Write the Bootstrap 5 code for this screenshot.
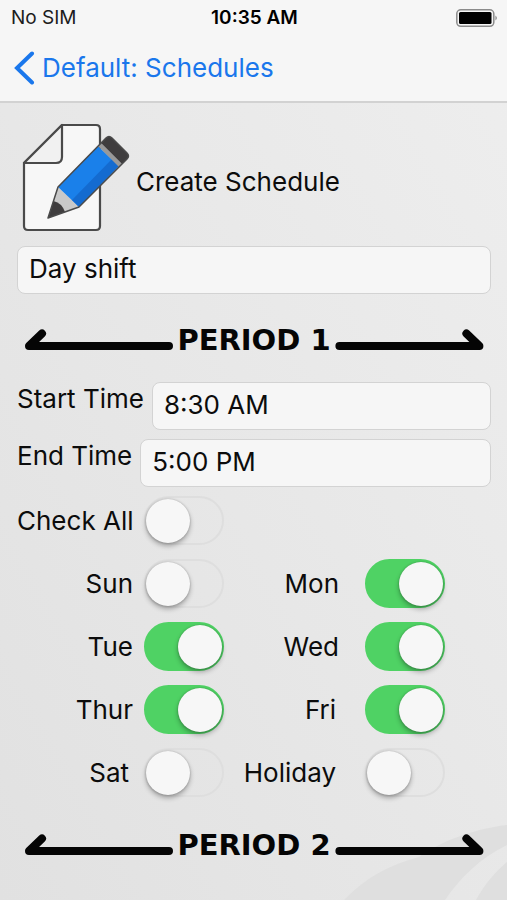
<!DOCTYPE html>
<html lang="en">
<head>
<meta charset="utf-8">
<meta name="viewport" content="width=device-width, initial-scale=1">
<title>Create Schedule</title>
<link href="https://cdn.jsdelivr.net/npm/bootstrap@5.3.0/dist/css/bootstrap.min.css" rel="stylesheet">
<style>
body { font-family: Inter, "Liberation Sans", sans-serif; font-size: 26px; line-height: 32px; color: #0c0c0c; background: #e7e7e7; }
.screen { background: linear-gradient(60deg, #e1e1e1 0%, #e7e7e7 45%, #eeeeee 100%); }
.top-area { background: #f6f6f6; border-bottom: 2px solid #d2d2d2; }
.status { font-size: 19px; line-height: 34px; padding: 1px 9px 0 11px; color: #1c1c1c; }
.status > * { flex: 1 1 0; }
.back-link { color: #1a77ec; padding: 15px 14px 15px; gap: 7px; line-height: 36px; }
.content { padding: 18px 16px 0 17px; }
.heading { font-size: 26px; line-height: 32px; padding-top: 8px; }
.field { font-size: 26px; line-height: 32px; height: 48px; padding: 0 11px 3px; background: #f6f6f6; border: 1px solid #d3d3d3; border-radius: 8px; color: #0c0c0c; }
.name-field { margin-top: 11px; }
.time-label { line-height: 34px; }
.period { font-family: "DejaVu Sans", sans-serif; font-weight: 700; font-size: 29px; line-height: 32px; color: #050505; gap: 3px; padding: 0 7px; margin: 29px 0 26px; }
.period svg { flex: 1 1 0; min-width: 0; height: 24px; }
.period span { padding-top: 1px; }
.rows { gap: 9px; margin-bottom: 31px; }
.days { display: grid; grid-template-columns: 116px 80px minmax(114px, 1fr) 80px; column-gap: 11px; row-gap: 14px; padding-right: 46px; }
.days label { text-align: right; }
.days .second { padding-right: 15px; }
.days .third { padding-right: 18px; }
.toggle { appearance: none; position: relative; flex: none; width: 80px; height: 49px; margin: 0; border: 2px solid #dedede; border-radius: 25px; background: transparent; }
.toggle::before { content: ""; display: block; width: 44px; height: 44px; margin-top: 1px; border-radius: 50%; background: #f7f7f7; box-shadow: 0 3px 5px rgba(0,0,0,.3), 0 0 2px rgba(0,0,0,.25); }
.toggle:checked { background: #4fd264; border-color: #4fd264; }
.toggle:checked::before { margin-left: 32px; }
.watermark { right: 0; bottom: 0; width: 180px; height: 100px; z-index: 0; }
</style>
<script src="https://cdn.jsdelivr.net/npm/bootstrap@5.3.0/dist/js/bootstrap.bundle.min.js"></script>
</head>
<body>
<div class="screen position-relative min-vh-100 d-flex flex-column">
  <svg class="watermark position-absolute" viewBox="0 0 180 100" aria-hidden="true">
    <path fill="#dfdfdf" d="M17 100C38 78 62 65 92 57C113 42 145 29 180 25V45C153 58 133 78 118 100Z"/>
    <path fill="#dfdfdf" d="M149 100C157 85 168 72 180 62V100Z"/>
  </svg>
  <header class="top-area">
    <div class="status d-flex align-items-center">
      <span>No SIM</span>
      <span class="fw-semibold text-center text-black">10:35 AM</span>
      <span class="d-flex justify-content-end">
        <svg width="42" height="20" viewBox="0 0 42 20" role="img" aria-label="Battery full">
          <rect x=".8" y="1.8" width="37" height="16.5" rx="4" fill="none" stroke="#8b8b8b" stroke-width="1.5"/>
          <rect x="3" y="4" width="32.5" height="12" rx="1.5"/>
          <path d="M39.5 7.5Q42 10 39.5 12.5Z" fill="#777"/>
        </svg>
      </span>
    </div>
    <nav class="d-flex">
      <a href="#" class="back-link d-inline-flex align-items-center text-decoration-none">
        <svg width="21" height="34" viewBox="0 0 21 34" fill="none" stroke="currentColor" stroke-width="4" stroke-linecap="round" aria-hidden="true"><path d="M18 2.5L3 17L18 31.500"/></svg>
        <span>Default: Schedules</span>
      </a>
    </nav>
  </header>
  <main class="content position-relative">
    <div class="d-flex align-items-center">
      <svg class="flex-shrink-0" width="119" height="114" viewBox="17 121 119 114" stroke-linejoin="round" aria-hidden="true">
        <path d="M62 125H96Q100 125 100 129V226Q100 230 96 230H28Q24 230 24 226V163Z" fill="#f7f7f7" stroke="#4a4a4a" stroke-width="2.200"/>
        <path d="M62 125V157Q62 163 56 163H24Z" fill="#f1f1f1" stroke="#4a4a4a" stroke-width="2.200"/>
        <path d="M48 218L58 187L79 207Z" fill="#c9c9c9"/>
        <path d="M48 218L53.500 201Q62 203 65 212Z" fill="#3f3d3e"/>
        <path d="M58 187L98 146L119 166L79 207Z" fill="#1a80ea"/>
        <path d="M72 200L112 159L119 166L79 207Z" fill="#146bd0"/>
        <path d="M98 146L101 143L122 164L119 167Z" fill="#999"/>
        <path d="M101 143L106 138Q109 135 112 138L127 153Q130 156 127 159L122 164Z" fill="#3f3d3e"/>
        <path d="M48 218L58 187L106 138Q109 135 112 138L127 153Q130 156 127 159L79 207Z" fill="none" stroke="#4a4a4a" stroke-width="1.500"/>
      </svg>
      <h1 class="heading m-0 fw-normal">Create Schedule</h1>
    </div>
    <input class="field name-field form-control" type="text" value="Day shift" aria-label="Schedule name">
    <div class="period d-flex align-items-center">
      <svg viewBox="0 0 150 24" preserveAspectRatio="xMinYMid meet" fill="none" stroke="#050505" stroke-width="8" stroke-linecap="round" stroke-linejoin="round" aria-hidden="true"><path d="M145 18H5L18 5.500"/></svg>
      <span>PERIOD 1</span>
      <svg viewBox="0 0 150 24" preserveAspectRatio="xMaxYMid meet" fill="none" stroke="#050505" stroke-width="8" stroke-linecap="round" stroke-linejoin="round" aria-hidden="true"><path d="M5 18H145L132 5.500"/></svg>
    </div>
    <div class="rows d-flex flex-column">
      <div class="d-flex gap-2">
        <label class="time-label flex-shrink-0" for="start">Start Time</label>
        <input class="field form-control" id="start" type="text" value="8:30 AM">
      </div>
      <div class="d-flex gap-2">
        <label class="time-label flex-shrink-0" for="end">End Time</label>
        <input class="field form-control" id="end" type="text" value="5:00 PM">
      </div>
      <div class="days align-items-center">
        <label for="all" class="text-nowrap">Check All</label><input class="toggle" id="all" type="checkbox" role="switch"><span></span><span></span>
        <label for="sun">Sun</label><input class="toggle" id="sun" type="checkbox" role="switch">
        <label for="mon" class="second">Mon</label><input class="toggle" id="mon" type="checkbox" role="switch" checked>
        <label for="tue">Tue</label><input class="toggle" id="tue" type="checkbox" role="switch" checked>
        <label for="wed" class="second">Wed</label><input class="toggle" id="wed" type="checkbox" role="switch" checked>
        <label for="thur">Thur</label><input class="toggle" id="thur" type="checkbox" role="switch" checked>
        <label for="fri" class="third">Fri</label><input class="toggle" id="fri" type="checkbox" role="switch" checked>
        <label for="sat" class="pe-1">Sat</label><input class="toggle" id="sat" type="checkbox" role="switch">
        <label for="holiday" class="third">Holiday</label><input class="toggle" id="holiday" type="checkbox" role="switch">
      </div>
    </div>
    <div class="period d-flex align-items-center">
      <svg viewBox="0 0 150 24" preserveAspectRatio="xMinYMid meet" fill="none" stroke="#050505" stroke-width="8" stroke-linecap="round" stroke-linejoin="round" aria-hidden="true"><path d="M145 18H5L18 5.500"/></svg>
      <span>PERIOD 2</span>
      <svg viewBox="0 0 150 24" preserveAspectRatio="xMaxYMid meet" fill="none" stroke="#050505" stroke-width="8" stroke-linecap="round" stroke-linejoin="round" aria-hidden="true"><path d="M5 18H145L132 5.500"/></svg>
    </div>
  </main>
</div>
</body>
</html>
